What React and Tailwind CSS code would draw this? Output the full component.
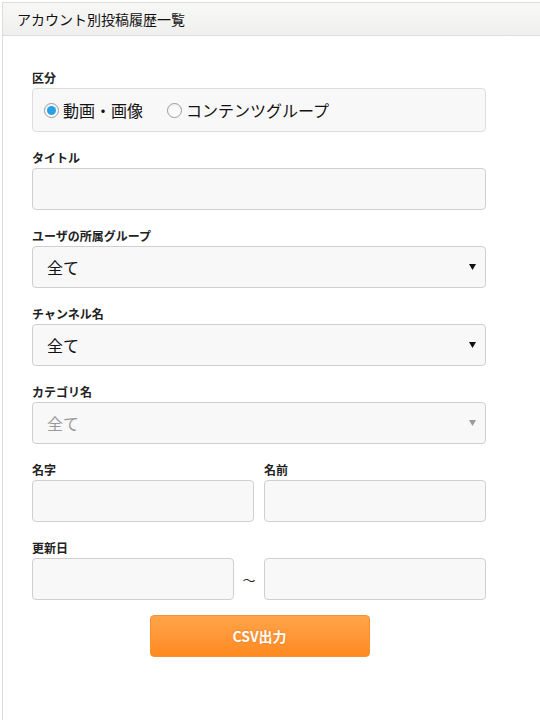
import React from "react";

const font = { fontFamily: '"Noto Sans CJK JP", "Liberation Sans", sans-serif' };

function Label({ children }) {
  return (
    <div className="h-[20px] flex items-center text-[12px] font-bold text-[#222] leading-none">
      {children}
    </div>
  );
}

function Input({ className = "" }) {
  return (
    <div className={"h-[42px] rounded-[4px] border border-[#cfcfcf] bg-[#f8f8f8] " + className} />
  );
}

function Select({ value, disabled }) {
  return (
    <div className="h-[42px] rounded-[4px] border border-[#cfcfcf] bg-[#f8f8f8] flex items-center pl-[14px] pr-[8px]">
      <span className={"flex-1 text-[16px] leading-none " + (disabled ? "text-[#9a9a9a]" : "text-[#111]")}>{value}</span>
      <svg width="7" height="6" viewBox="0 0 7 6" className="mr-[1px]">
        <path d="M0 0 H7 L3.5 6 Z" fill={disabled ? "#9a9a9a" : "#111"} />
      </svg>
    </div>
  );
}

function Radio({ checked, label }) {
  return (
    <div className="flex items-center gap-[4px]">
      <span className="w-[15px] h-[15px] rounded-full border border-[#9a9a9a] bg-gradient-to-b from-[#f4f4f4] to-[#ffffff] flex items-center justify-center">
        {checked && <span className="w-[9px] h-[9px] rounded-full bg-[#2aa0e6]" />}
      </span>
      <span className="text-[16px] leading-none text-[#111]">{label}</span>
    </div>
  );
}

export default function App() {
  return (
    <div className="w-[540px] h-[720px] bg-white overflow-hidden pt-[2px] pl-[2px]" style={font}>
      <div className="w-[600px] h-[740px] border border-[#dcdcdc]">
        <div className="h-[33px] bg-gradient-to-b from-[#f8f8f7] to-[#efefed] border-b border-[#dddddd] flex items-center pl-[14px] text-[14px] text-[#111]">
          アカウント別投稿履歴一覧
        </div>
        <div className="pt-[32px] pl-[29px] w-[483px] flex flex-col gap-[16px]">
          <div>
            <Label>区分</Label>
            <div className="h-[44px] rounded-[4px] border border-[#dddddd] bg-[#f8f8f8] flex items-center pl-[11px] gap-[24px]">
              <Radio checked label="動画・画像" />
              <Radio label="コンテンツグループ" />
            </div>
          </div>
          <div>
            <Label>タイトル</Label>
            <Input />
          </div>
          <div>
            <Label>ユーザの所属グループ</Label>
            <Select value="全て" />
          </div>
          <div>
            <Label>チャンネル名</Label>
            <Select value="全て" />
          </div>
          <div>
            <Label>カテゴリ名</Label>
            <Select value="全て" disabled />
          </div>
          <div className="grid grid-cols-2 gap-x-[10px]">
            <div>
              <Label>名字</Label>
              <Input />
            </div>
            <div>
              <Label>名前</Label>
              <Input />
            </div>
          </div>
          <div>
            <Label>更新日</Label>
            <div className="flex items-center">
              <Input className="w-[202px]" />
              <span className="w-[30px] text-center text-[13px] leading-none text-[#222]">〜</span>
              <Input className="flex-1" />
            </div>
          </div>
          <div className="flex justify-center pl-[1px] -mt-[1px]">
            <button className="w-[220px] h-[42px] rounded-[4px] border border-[#f7902e] bg-gradient-to-b from-[#ffa449] to-[#ff8a1e] text-white text-[14px] font-bold [text-shadow:0_0_2px_rgba(200,100,0,0.5)]">
              CSV出力
            </button>
          </div>
        </div>
      </div>
    </div>
  );
}
